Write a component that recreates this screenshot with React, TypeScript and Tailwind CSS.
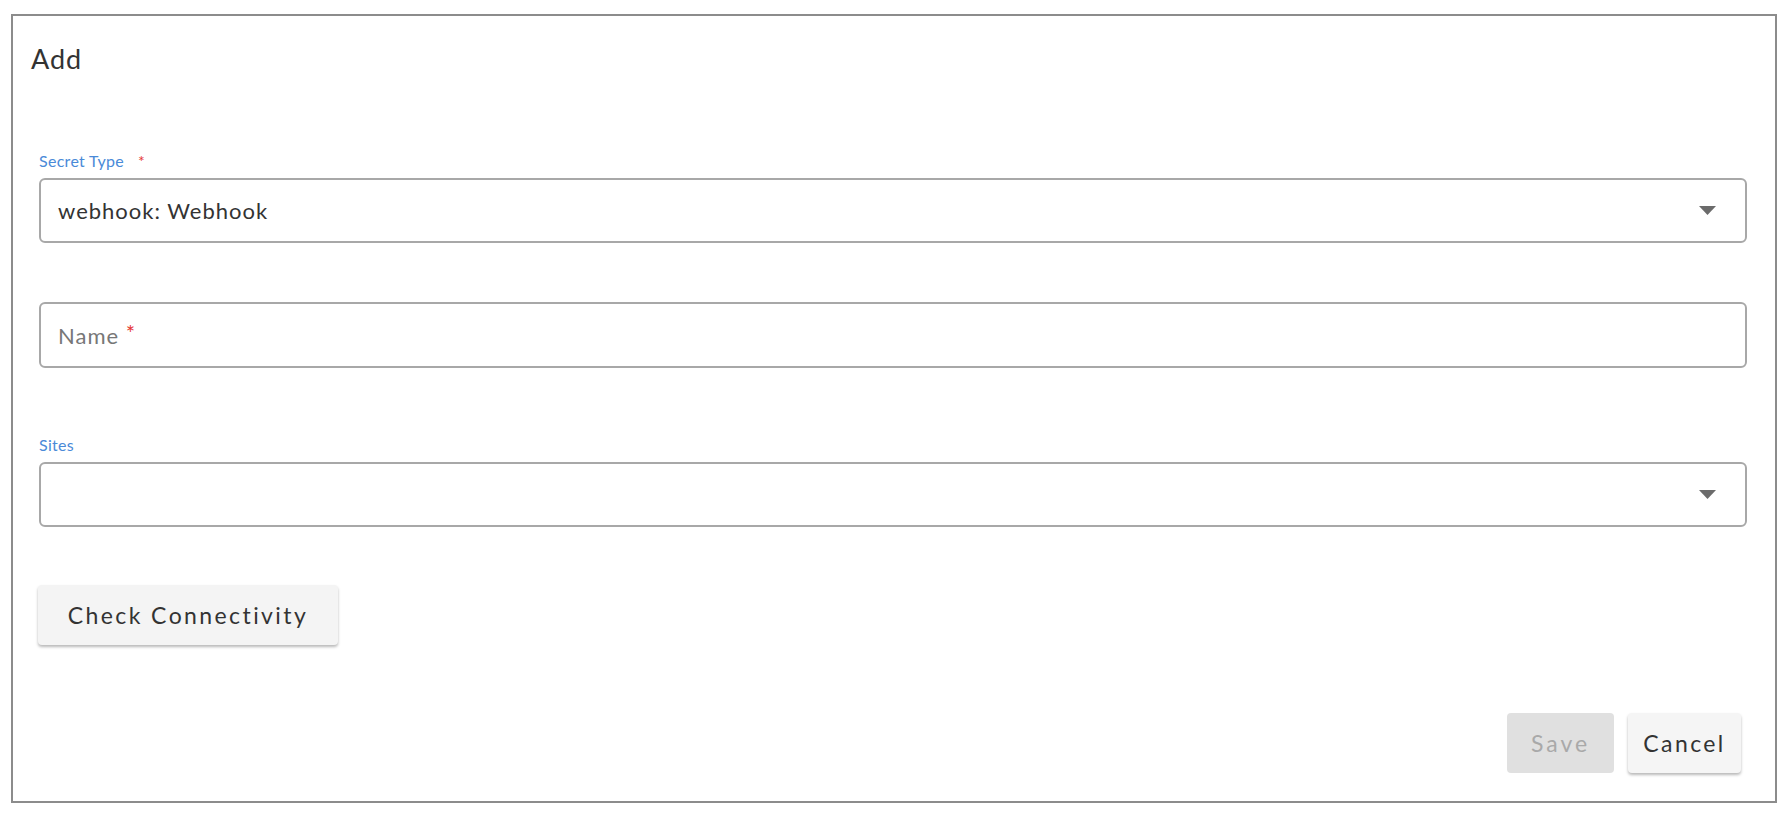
export default function App() {
  return (
    <div
      className="min-h-[818px] bg-white pl-[11px] pt-[14px]"
      style={{ fontFamily: "Lato, 'Open Sans', sans-serif" }}
    >
      <div className="w-[1766px] h-[789px] border-2 border-[#8c8c8c] flex flex-col">
        <div className="pt-[27px] pl-[18px] text-[27px] leading-[32px] tracking-[1px] text-[#333]">
          Add
        </div>

        <div className="pl-[26px] pr-[28px] flex flex-col">
          <label className="mt-[76px] mb-[7px] text-[16px] leading-[20px] tracking-[0.3px] text-[#4a8ad8]">
            Secret Type
            <span className="ml-[14px] text-[#e53935]">*</span>
          </label>
          <div className="h-[65px] border-2 border-[#a8a8a8] rounded-md flex items-center pl-[17px] pr-[29px]">
            <span className="flex-1 text-[22px] tracking-[1px] text-[#333]">webhook: Webhook</span>
            <Caret />
          </div>

          <div className="mt-[59px] h-[66px] border-2 border-[#a8a8a8] rounded-md flex items-center pl-[17px]">
            <span className="text-[22px] tracking-[1px] text-[#777]">
              Name <span className="text-[#e53935] relative -top-[3px] text-[22px]">*</span>
            </span>
          </div>

          <label className="mt-[67px] mb-[7px] text-[16px] leading-[20px] tracking-[0.3px] text-[#4a8ad8]">
            Sites
          </label>
          <div className="h-[65px] border-2 border-[#a8a8a8] rounded-md flex items-center justify-end pr-[29px]">
            <Caret />
          </div>

          <button className="mt-[58px] w-[300px] h-[60px] -ml-px rounded bg-[#f4f4f4] shadow-[0_2px_3px_rgba(0,0,0,0.28)] flex items-center justify-center text-[23px] tracking-[2.4px] text-[#333]">
            Check Connectivity
          </button>
        </div>

        <div className="mt-[68px] pr-[34px] flex justify-end gap-[14px]">
          <button className="w-[107px] h-[60px] rounded bg-[#e0e0e0] flex items-center justify-center text-[23px] tracking-[3px] text-[#a9a9a9]">
            Save
          </button>
          <button className="w-[113px] h-[60px] rounded bg-[#f5f5f5] shadow-[0_2px_3px_rgba(0,0,0,0.28)] flex items-center justify-center text-[23px] tracking-[2.4px] text-[#333]">
            Cancel
          </button>
        </div>
      </div>
    </div>
  );
}

function Caret() {
  return (
    <svg width="17" height="9" viewBox="0 0 17 9" className="shrink-0">
      <path d="M0 0 L17 0 L8.5 9 Z" fill="#6b6b6b" />
    </svg>
  );
}
